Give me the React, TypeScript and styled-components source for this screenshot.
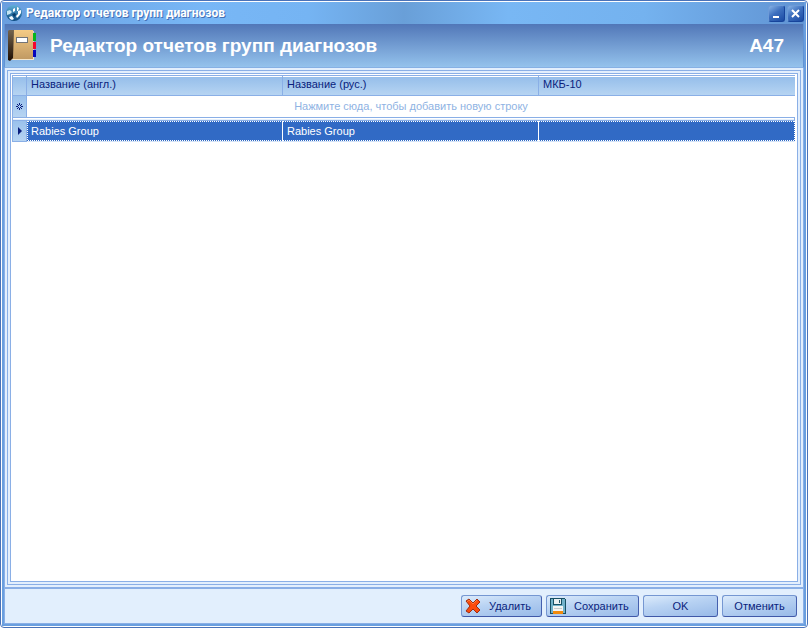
import React from 'react';
import styled, { createGlobalStyle } from 'styled-components';

const Global = createGlobalStyle`
  * { box-sizing: border-box; }
  html, body { margin: 0; height: 100%; }
  #root { height: 100%; }
  body {
    background: #fff;
    color: #0a1e7d;
    font: 11px/14px "Liberation Sans", Arial, sans-serif;
  }
`;

const Shadow = styled.div`
  min-height: 100vh;
  display: flex;
  border: 1px solid #4a72b8;
  border-radius: 4px;
  padding: 1px;
  background: #fff;
`;

const Window = styled.main`
  flex: 1;
  min-width: 0;
  display: flex;
  flex-direction: column;
  border: 2px solid #6a9fdf;
  border-top: 0;
`;

const TitleBar = styled.header`
  display: flex;
  align-items: center;
  height: 22px;
  gap: 4px;
  padding: 0 0 0 2px;
  color: #fff;
  background: linear-gradient(90deg, #6a9fdf 0%, #78b7f6 25%, #75b4f3 38%, #699fd8 50%, #78b7f4 63%, #74b2ef 80%, #6194d3 100%);
`;

const Caption = styled.div`
  flex: 1;
  font: bold 12px/16px Roboto, "Liberation Sans", sans-serif;
  white-space: nowrap;
  text-shadow: 1px 1px 0 #4570b4;
`;

const WindowButtons = styled.div`
  display: flex;
  gap: 2px;
`;

const WindowButton = styled.button`
  width: 17px;
  height: 17px;
  padding: 0;
  border: 1px solid;
  border-color: #6d9bd8 #17449b #17449b #6d9bd8;
  border-radius: 3px;
  background: linear-gradient(145deg, #86b3e6 0%, #3e70bf 45%, #1a4aa3 100%);
  color: #fff;

  svg { display: block; }
`;

const Banner = styled.div`
  display: flex;
  align-items: center;
  height: 44px;
  gap: 14px;
  padding: 0 19px 0 3px;
  border-left: 1px solid #6193d5;
  border-right: 1px solid #6193d5;
  border-bottom: 1px solid #86b0e4;
  background: linear-gradient(#5177b8, #94c2ec);
  color: #fff;
  font-size: 19px;
  font-weight: bold;
  line-height: 22px;
`;

const Heading = styled.h1`
  flex: 1;
  margin: 0;
  font: inherit;
  white-space: nowrap;
`;

const Panel = styled.div`
  flex: 1;
  display: flex;
  flex-direction: column;
  padding: 2px;
  border: 1px solid #8aafe6;
  border-width: 0 1px 2px;
  background: #e3effd;
`;

const Frame = styled.div`
  flex: 1;
  display: flex;
  padding: 2px;
  border: 1px solid #8aafe6;
`;

const GridFrame = styled.div`
  flex: 1;
  padding: 1px 2px 1px 1px;
  border: 1px solid #8aafe6;
  background: #fff;
`;

const Table = styled.table`
  width: 100%;
  table-layout: fixed;
  border-collapse: separate;
  border-spacing: 0;
`;

const IndicatorCol = styled.col`
  width: 15px;
`;

const Th = styled.th`
  height: 21px;
  padding: 0 4px 3px;
  border: 1px solid #8aafe6;
  border-left-width: 0;
  background: linear-gradient(#94bdea, #b6d4f2);
  box-shadow: inset 0 1px #fff;
  font-weight: normal;
  text-align: left;
  vertical-align: middle;

  &:first-child { border-left-width: 1px; }
  &:last-child { border-right-width: 0; }
`;

const Indicator = styled.td<{ $closed?: boolean }>`
  height: 21px;
  padding: 0;
  border: 1px solid #8aafe6;
  border-top: 0;
  border-bottom-width: ${p => (p.$closed ? 1 : 0)}px;
  background: linear-gradient(#9ac1ec, #b6d4f2);

  svg { display: block; margin: 0 auto; }
`;

const Hint = styled.td`
  padding: 0 0 1px;
  color: #8fb3e3;
  text-align: center;
`;

const Divider = styled.td`
  height: 4px;
  padding: 0;
  border: 1px solid #8aafe6;
  background: #e3effd;
  box-shadow: inset 0 1px #fff;
`;

const dots = 'repeating-linear-gradient(90deg, #fff 0 1px, #316ac5 1px 2px)';

const Cell = styled.td`
  height: 21px;
  padding: 0 4px;
  border-bottom: 1px solid #d5e4f8;
  border-right: 1px solid #fff;
  background:
    ${dots} 0 0 / 100% 1px no-repeat,
    ${dots} 0 100% / 100% 1px no-repeat,
    #316ac5;
  color: #fff;

  &:nth-child(2) {
    padding-left: 3px;
    border-left: 1px dotted #fff;
  }
  &:last-child { border-right-style: dotted; }
`;

const Footer = styled.footer`
  display: flex;
  justify-content: flex-end;
  align-items: center;
  height: 35px;
  gap: 4px;
  padding: 0 6px 0 0;
  border: 1px solid #8aafe6;
  border-top: 0;
  background: #e2effd;
`;

const Button = styled.button<{ $width: number; $icon?: boolean }>`
  display: flex;
  align-items: center;
  justify-content: ${p => (p.$icon ? 'flex-start' : 'center')};
  gap: 8px;
  width: ${p => p.$width}px;
  height: 22px;
  padding: 0 3px;
  border: 1px solid;
  border-color: #7597d2 #4560ae #3f58a8 #7597d2;
  border-radius: 3px;
  background: linear-gradient(170deg, #dcebfb 0%, #b9d3f3 40%, #98bae8 100%);
  color: #0a1e7d;
  font: inherit;
`;

const GlobeIcon = () => (
  <svg width="16" height="16" viewBox="0 0 16 16">
    <defs>
      <linearGradient id="globe" x1="0" y1="0" x2="0" y2="1">
        <stop offset="0" stopColor="#5fb0d8" />
        <stop offset="1" stopColor="#0b4a80" />
      </linearGradient>
    </defs>
    <circle cx="8" cy="8" r="8" fill="url(#globe)" />
    <path d="M1 6L4 5 6 7 4 9 1 10Z" fill="#c4e4f2" />
    <path d="M7 4L9 3 9 6 7 7Z M11 2L13 3 12 6 11 6Z" fill="#fff" />
    <path d="M12 6L15 5 15 8 13 11 11 13 10 11 12 9Z" fill="#fff" />
    <path d="M3 12L6 11 8 14 6 15 4 14Z" fill="#f4fbff" />
    <path d="M6 9L9 8 10 10 8 12Z" fill="#073d6b" />
  </svg>
);

const BookIcon = () => (
  <svg width="28" height="32" viewBox="0 0 28 32">
    <defs>
      <linearGradient id="cover" x1="0" y1="0" x2="0" y2="1">
        <stop offset="0" stopColor="#f5cb85" />
        <stop offset="1" stopColor="#c19a63" />
      </linearGradient>
      <linearGradient id="spine" x1="0" y1="0" x2="0" y2="1">
        <stop offset="0" stopColor="#75654f" />
        <stop offset="1" stopColor="#1d0d02" />
      </linearGradient>
    </defs>
    <path d="M2 1H26V30H2Z" fill="#d8d2c8" />
    <rect x="25" y="3" width="3" height="8" fill="#04b51d" />
    <rect x="25" y="12" width="3" height="7" fill="#f5052f" />
    <rect x="25" y="20" width="3" height="7" fill="#0505bd" />
    <rect x="4" y="0" width="21" height="29" fill="url(#cover)" />
    <path d="M1 0H6L5 28 2 31 0 30V1Z" fill="url(#spine)" />
    <path d="M5 29.500H25.500V27" fill="none" stroke="#f3e5ca" />
    <rect x="8.5" y="7.5" width="11" height="5" fill="#fff" stroke="#737578" />
  </svg>
);

const DeleteIcon = () => (
  <svg width="16" height="16" viewBox="0 0 16 16">
    <path d="M1 3L4 1 8 5 12 1 15 4 11 8 15 12 12 15 8 11 4 15 1 13 5 8Z" fill="#fb4a0c" stroke="#a02c10" strokeLinejoin="round" />
    <path d="M2 4L4 2 8 6 12 2" fill="none" stroke="#ff7a3a" />
  </svg>
);

const SaveIcon = () => (
  <svg width="16" height="16" viewBox="0 0 16 16" shapeRendering="crispEdges">
    <path d="M0 0H14L16 2V16H0Z" fill="#174f63" />
    <path d="M1 1H14L15 2V15H1Z" fill="#73b2ca" />
    <rect x="3" y="0" width="9" height="7" fill="#174f63" />
    <rect x="4" y="1" width="7" height="5" fill="#e9eff1" />
    <rect x="9" y="2" width="1" height="3" fill="#245a70" />
    <rect x="3" y="8" width="10" height="5" fill="#f4f4f2" />
    <path d="M4 10.500H12" stroke="#c5cacc" />
    <rect x="3" y="13" width="10" height="3" fill="#f18a0b" />
  </svg>
);

const rows = [{ en: 'Rabies Group', ru: 'Rabies Group', code: '' }];

export default function App() {
  return (
    <>
      <Global />
      <Shadow>
        <Window>
          <TitleBar>
            <GlobeIcon />
            <Caption>Редактор отчетов групп диагнозов</Caption>
            <WindowButtons>
              <WindowButton aria-label="Свернуть">
                <svg width="15" height="15"><path d="M4 11H10" stroke="#fff" strokeWidth="2" /></svg>
              </WindowButton>
              <WindowButton aria-label="Закрыть">
                <svg width="15" height="15"><path d="M4 4L11 11M11 4L4 11" stroke="#fff" strokeWidth="2" /></svg>
              </WindowButton>
            </WindowButtons>
          </TitleBar>
          <Banner>
            <BookIcon />
            <Heading>Редактор отчетов групп диагнозов</Heading>
            <span>A47</span>
          </Banner>
          <Panel>
            <Frame>
              <GridFrame>
                <Table>
                  <colgroup>
                    <IndicatorCol />
                    <col />
                    <col />
                    <col />
                  </colgroup>
                  <thead>
                    <tr>
                      <Th />
                      <Th scope="col">Название (англ.)</Th>
                      <Th scope="col">Название (рус.)</Th>
                      <Th scope="col">МКБ-10</Th>
                    </tr>
                  </thead>
                  <tbody>
                    <tr>
                      <Indicator>
                        <svg width="9" height="9" viewBox="0 0 9 9" shapeRendering="crispEdges">
                          <path
                            d="M4 1h1v2h-1z M4 6h1v2h-1z M1 4h2v1h-2z M6 4h2v1h-2z M2 2h1v1h-1z M3 3h1v1h-1z M5 3h1v1h-1z M6 2h1v1h-1z M3 5h1v1h-1z M2 6h1v1h-1z M5 5h1v1h-1z M6 6h1v1h-1z"
                            fill="#0a1e7d"
                          />
                        </svg>
                      </Indicator>
                      <Hint colSpan={3}>Нажмите сюда, чтобы добавить новую строку</Hint>
                    </tr>
                    <tr>
                      <Divider colSpan={4} />
                    </tr>
                    {rows.map(row => (
                      <tr key={row.en}>
                        <Indicator $closed>
                          <svg width="5" height="8" viewBox="0 0 5 8"><path d="M1 0L5 4 1 8Z" fill="#0a1e7d" /></svg>
                        </Indicator>
                        <Cell>{row.en}</Cell>
                        <Cell>{row.ru}</Cell>
                        <Cell>{row.code}</Cell>
                      </tr>
                    ))}
                  </tbody>
                </Table>
              </GridFrame>
            </Frame>
          </Panel>
          <Footer>
            <Button $width={81} $icon><DeleteIcon />Удалить</Button>
            <Button $width={93} $icon><SaveIcon />Сохранить</Button>
            <Button $width={75}>OK</Button>
            <Button $width={75}>Отменить</Button>
          </Footer>
        </Window>
      </Shadow>
    </>
  );
}
